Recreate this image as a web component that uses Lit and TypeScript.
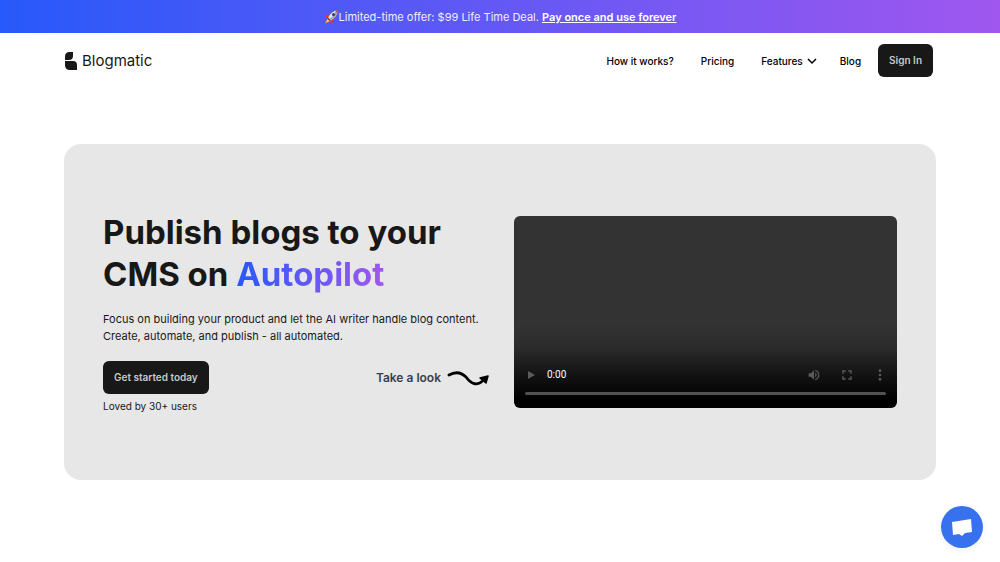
import { LitElement, html, css } from "lit";
import { customElement } from "lit/decorators.js";

@customElement("video-card")
class VideoCard extends LitElement {
  static styles = css`
    :host {
      display: block;
    }
    .player {
      display: flex;
      flex-direction: column;
      justify-content: flex-end;
      box-sizing: border-box;
      aspect-ratio: 2 / 1;
      width: 100%;
      padding: 0 11px 13px;
      border-radius: 6px;
      background: linear-gradient(#333 0%, #333 56%, #2c2c2c 68%, #141414 82%, #000 96%);
    }
    .controls {
      display: flex;
      align-items: center;
      padding-bottom: 9px;
    }
    .icon {
      display: flex;
      padding: 0;
      border: 0;
      background: none;
      color: #5c5c5c;
    }
    .time {
      flex: 1;
      margin-left: 10px;
      font: 10px/16px Roboto, sans-serif;
      color: #fff;
    }
    .actions {
      display: flex;
      gap: 21px;
    }
    .track {
      appearance: none;
      display: block;
      width: 100%;
      height: 3px;
      margin: 0;
      border-radius: 2px;
      background: #525252;
    }
    .track::-webkit-slider-thumb {
      appearance: none;
      width: 0;
      height: 0;
    }
  `;

  render() {
    return html`
      <div class="player">
        <div class="controls">
          <button class="icon" aria-label="Play">
            <svg width="12" height="12" viewBox="0 0 12 12"><path d="M3 2v8l7-4z" fill="currentColor" /></svg>
          </button>
          <span class="time">0:00</span>
          <div class="actions">
            <button class="icon" aria-label="Mute">
              <svg width="12" height="12" viewBox="2 2 20 20" fill="currentColor">
                <path d="M3 9v6h4l5 5V4L7 9zm13.500 3c0-1.770-1.020-3.290-2.500-4.030v8.050c1.480-.730 2.500-2.250 2.500-4.020zM14 3.230v2.060c2.890.86 5 3.540 5 6.710s-2.110 5.850-5 6.710v2.060c4.010-.91 7-4.490 7-8.770s-2.990-7.860-7-8.770z" />
              </svg>
            </button>
            <button class="icon" aria-label="Full screen">
              <svg width="12" height="12" viewBox="3 3 18 18" fill="currentColor">
                <path d="M7 14H5v5h5v-2H7zM5 10h2V7h3V5H5zm12 7h-3v2h5v-5h-2zM14 5v2h3v3h2V5z" />
              </svg>
            </button>
            <button class="icon" aria-label="More options">
              <svg width="12" height="12" viewBox="3 3 18 18" fill="currentColor">
                <circle cx="12" cy="5.500" r="2" /><circle cx="12" cy="12" r="2" /><circle cx="12" cy="18.500" r="2" />
              </svg>
            </button>
          </div>
        </div>
        <input class="track" type="range" min="0" max="100" value="0" aria-label="Seek" />
      </div>
    `;
  }
}

@customElement("app-root")
class AppRoot extends LitElement {
  static styles = css`
    :host {
      display: block;
      font-family: Inter, sans-serif;
      color: #181818;
      background: #fff;
    }
    a {
      color: inherit;
      text-decoration: none;
    }
    button {
      font-family: inherit;
    }
    .banner {
      display: flex;
      justify-content: center;
      align-items: center;
      padding: 9px 16px 7px;
      font-size: 11px;
      line-height: 17px;
      color: #eef;
      background: linear-gradient(to right, #2859fa, #9f57ef);
    }
    .banner p {
      margin: 0;
    }
    .offer {
      font-weight: 600;
      color: #fff;
      text-decoration: underline;
    }
    .header {
      display: flex;
      align-items: center;
      justify-content: space-between;
      padding: 11px 67px 11px 64px;
    }
    .brand {
      display: flex;
      align-items: center;
      gap: 4px;
      font-size: 15px;
      line-height: 20px;
    }
    .nav {
      display: flex;
      align-items: center;
      gap: 27px;
      font-size: 10px;
      font-weight: 500;
      line-height: 14px;
      color: #000;
    }
    .menu {
      display: flex;
      align-items: center;
      gap: 3px;
      padding: 0;
      border: 0;
      background: none;
      font-size: 10px;
      font-weight: 500;
      line-height: 14px;
      color: inherit;
    }
    .end {
      display: flex;
      align-items: center;
      gap: 17px;
      margin-left: -5px;
    }
    .solid {
      padding: 10px 11px;
      border: 0;
      border-radius: 6px;
      background: #181818;
      color: #c8c8c8;
      font-size: 10px;
      font-weight: 600;
      line-height: 13px;
    }
    .hero {
      display: grid;
      grid-template-columns: 386fr 383fr;
      align-items: center;
      gap: 25px;
      margin: 56px 64px 80px;
      padding: 67px 39px;
      border-radius: 17px;
      background: #e7e7e7;
    }
    .title {
      margin: 0 0 16px;
      font-size: 33px;
      font-weight: 700;
      line-height: 42px;
    }
    .accent {
      color: transparent;
      background: linear-gradient(to right, #2859fa, #9f57ef);
      background-clip: text;
      -webkit-background-clip: text;
    }
    .lead {
      margin: 0 0 16px;
      font-size: 11px;
      line-height: 17px;
    }
    .row {
      display: flex;
      align-items: center;
      justify-content: space-between;
    }
    .look {
      display: flex;
      align-items: center;
      gap: 6px;
      font-size: 12px;
      font-weight: 600;
      line-height: 18px;
      color: #374151;
    }
    .note {
      margin: 5px 0 0;
      font-size: 10px;
      line-height: 14px;
    }
    .rocket {
      vertical-align: -3px;
    }
    .chat {
      position: fixed;
      right: 17px;
      bottom: 14px;
      display: flex;
      padding: 0;
      border: 0;
      border-radius: 50%;
      background: #3771ed;
      box-shadow: 0 2px 8px rgba(0, 0, 0, 0.06);
    }
  `;

  render() {
    return html`
      <div class="banner">
        <p>
          <svg class="rocket" width="15" height="15" viewBox="0 0 30 30" aria-hidden="true">
            <path d="M8 17 2 29l11-5z" fill="#ff9b23" />
            <path d="m8 20-4 7 7-4z" fill="#ffe35c" />
            <path d="M12 11Q4 10 2 18l7-1zM19 18q2 8-6 11v-7z" fill="#d63c2f" />
            <path d="M8 18Q13 5 28 2q-1 15-16 21z" fill="#dce4ea" />
            <path d="M12 22Q26 15 28 2l-5 3q-1 9-13 15z" fill="#8998a5" />
            <path d="m22 3 6-1-1 6z" fill="#d63c2f" />
            <circle cx="19" cy="11" r="3" fill="#28415d" />
            <path d="m8 17 5 5-2 2-5-5z" fill="#9e2a27" />
          </svg>Limited-time offer: $99 Life Time Deal. <a class="offer" href="#pricing">Pay once and use forever</a>
        </p>
      </div>
      <header class="header">
        <a class="brand" href="#">
          <svg width="14" height="18" viewBox="0 0 14 18" aria-hidden="true">
            <path d="M1 8V4.500Q1 0 5.500 0H9v4q0 4-4 4zM1 9h8q4 0 4 4v5H6q-5 0-5-5z" fill="#181818" />
          </svg>
          Blogmatic
        </a>
        <nav class="nav">
          <a href="#how">How it works?</a>
          <a href="#pricing">Pricing</a>
          <button class="menu">
            Features
            <svg width="12" height="12" viewBox="0 0 12 12" fill="none" stroke="#000" stroke-width="1.500" aria-hidden="true">
              <path d="m2 4 4 4 4-4" />
            </svg>
          </button>
          <div class="end">
            <a href="#blog">Blog</a>
            <button class="solid">Sign In</button>
          </div>
        </nav>
      </header>
      <main class="hero">
        <section>
          <h1 class="title">Publish blogs to your CMS on <span class="accent">Autopilot</span></h1>
          <p class="lead">
            Focus on building your product and let the AI writer handle blog content. Create, automate, and publish - all
            automated.
          </p>
          <div class="row">
            <button class="solid">Get started today</button>
            <div class="look">
              Take a look
              <svg width="42" height="18" viewBox="0 0 42 18" fill="none" aria-hidden="true">
                <path d="M2 6C9 2 14 3 19 8c6 8 11 9 18 3" stroke="#000" stroke-width="2.800" stroke-linecap="round" />
                <path d="m33 9 8-2-2 7z" fill="#000" stroke="#000" stroke-width="1.500" stroke-linejoin="round" />
              </svg>
            </div>
          </div>
          <p class="note">Loved by 30+ users</p>
        </section>
        <video-card></video-card>
      </main>
      <button class="chat" aria-label="Open chat">
        <svg width="42" height="42" viewBox="0 0 42 42" aria-hidden="true">
          <path d="m11 16 19-3 1 13-7 1-3 3-3-2-6 1z" fill="#fff" />
        </svg>
      </button>
    `;
  }
}
